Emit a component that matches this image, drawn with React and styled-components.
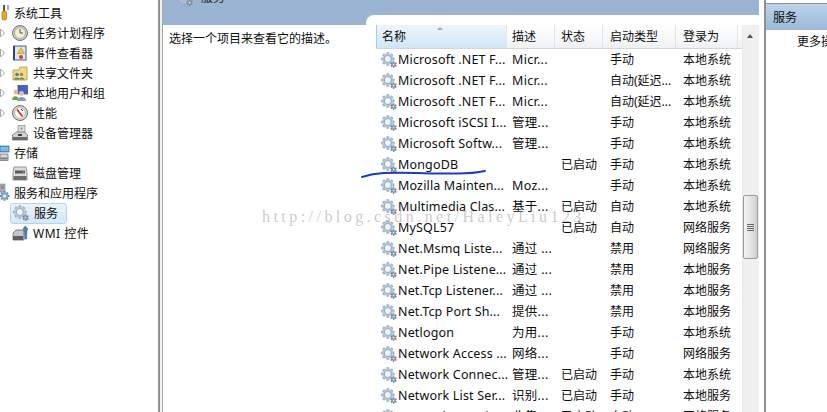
import React from "react";
import styled, { createGlobalStyle } from "styled-components";

const Global = createGlobalStyle`
  html, body { margin: 0; padding: 0; background: #fff; overflow: hidden; }
  #root { width: 827px; height: 412px; overflow: hidden; }
`;

const font = `"Noto Sans", "Noto Sans CJK SC", sans-serif`;

const Page = styled.div`
  position: relative;
  display: flex;
  width: 827px;
  height: 412px;
  overflow: hidden;
  background: #fff;
  color: #0e0e0e;
  font: 12px/21px ${font};
`;

const Tree = styled.nav`
  flex: 0 0 158px;
  padding-top: 3px;
  display: flex;
  flex-direction: column;
  box-sizing: border-box;
`;

const TreeRow = styled.div`
  height: 20px;
  display: flex;
  align-items: center;
  padding-left: ${(p) => p.$indent}px;
  position: relative;
  white-space: nowrap;
`;

const Arrow = styled.svg`
  position: absolute;
  left: 0;
  top: 5px;
  width: 6px;
  height: 10px;
`;

const TreeIcon = styled.svg`
  flex: 0 0 16px;
  width: 16px;
  height: 16px;
  margin-right: ${(p) => p.$gap ?? 5}px;
  overflow: visible;
`;

const Selected = styled.span`
  display: flex;
  align-items: center;
  height: 19px;
  margin-left: -2px;
  padding: 0 6px 0 2px;
  width: 47px;
  border: 1px solid #b5d4f0;
  border-radius: 3px;
  background: linear-gradient(#eaf3fc, #d5e7f9);
`;

const SelectedLabel = styled.span`
  font-size: 12px;
  margin-left: 5px;
`;

const Divider = styled.div`
  flex: 0 0 5px;
  box-sizing: border-box;
  border-left: 2px solid #8f8f8f;
  border-right: 1px solid #a9a9a9;
  background: #f0f0f0;
`;

const Center = styled.main`
  flex: 0 0 595px;
  display: flex;
  flex-direction: column;
`;

const Band = styled.div`
  flex: 0 0 25px;
  background: #9ab4d1;
  display: flex;
  align-items: flex-start;
`;

const BandInner = styled.div`
  display: flex;
  gap: 8px;
  margin-top: -13px;
  padding-left: 14px;
  height: 21px;
  color: #222;
  align-items: center;
`;

const Body = styled.div`
  flex: 1;
  display: flex;
  min-height: 0;
`;

const Desc = styled.p`
  flex: 0 0 203px;
  margin: 0;
  padding: 3px 0 0 6px;
  box-sizing: border-box;
  font-size: 12px;
  line-height: 21px;
`;

const ListPanel = styled.section`
  flex: 1;
  margin-top: -10px;
  padding: 10px 0 0 10px;
  background: #fff;
  border-radius: 8px 0 0 0;
  display: flex;
  min-width: 0;
`;

const Table = styled.div`
  flex: 0 0 366px;
  min-width: 0;
`;

const cols = "131px 48px 48px 73px 62px 4px";

const Head = styled.div`
  display: grid;
  grid-template-columns: ${cols};
  height: 23px;
  background: linear-gradient(#fff 0%, #f8f9fa 55%, #eef0f3 100%);
  border-bottom: 1px solid #d5d5d5;
`;

const HeadCell = styled.div`
  position: relative;
  box-sizing: border-box;
  padding-left: ${(p) => p.$pad ?? 5}px;
  padding-top: 1px;
  border-right: 1px solid #e3e4e6;
  background: ${(p) => p.$sorted ? "linear-gradient(#eef6fc 0%, #dcedf9 55%, #cfe6f6 100%)" : "none"};
  border-left: ${(p) => p.$sorted ? "1px solid #a5cbe6" : "none"};
  font-size: 12px;
  line-height: 21px;
`;

const SortMark = styled.span`
  position: absolute;
  left: 60px;
  top: 2px;
  width: 0;
  height: 0;
  border-style: solid;
  border-width: 0 3.5px 3.5px 3.5px;
  border-color: transparent transparent #8ab0cc transparent;
`;

const Row = styled.div`
  display: grid;
  grid-template-columns: ${cols};
  height: 21px;
  white-space: nowrap;
  font-size: 12px;
`;

const NameCell = styled.div`
  display: flex;
  align-items: center;
  gap: 1px;
  padding-left: 5px;
  letter-spacing: 0.16px;
  font-size: 12.5px;
`;

const Cell = styled.div`
  padding-left: ${(p) => p.$pad ?? 5}px;
`;

const DescCell = styled(Cell)`
  letter-spacing: 0.3px;
  font-size: 12.5px;
`;

const ScrollBar = styled.div`
  flex: 0 0 17px;
  background: #f0f0f0;
  position: relative;
  border-left: 1px solid #e9e9e9;
  box-sizing: border-box;
`;

const ScrollArrow = styled.span`
  position: absolute;
  left: 4px;
  top: 9px;
  width: 0;
  height: 0;
  border-style: solid;
  border-width: 0 3.5px 4px 3.5px;
  border-color: transparent transparent #555 transparent;
`;

const Thumb = styled.div`
  position: absolute;
  left: 0;
  top: 170px;
  width: 15px;
  height: 64px;
  box-sizing: border-box;
  border: 1px solid #9a9a9a;
  border-radius: 2px;
  background: linear-gradient(90deg, #f3f3f3 0%, #e6e6e6 45%, #cfcfcf 100%);
  display: flex;
  flex-direction: column;
  gap: 1px;
  align-items: center;
  justify-content: center;
`;

const Grip = styled.i`
  display: block;
  width: 7px;
  height: 1px;
  background: #666;
`;

const SideDivider = styled.div`
  flex: 0 0 7px;
  box-sizing: border-box;
  border-right: 2px solid #8f8f8f;
  background: #fff;
`;

const Actions = styled.aside`
  flex: 1;
  padding-top: 3px;
  min-width: 0;
  white-space: nowrap;
  overflow: hidden;
`;

const ActionsHead = styled.div`
  height: 27px;
  box-sizing: border-box;
  padding: 3px 0 0 7px;
  border-top: 1px solid #8f8f8f;
  background: linear-gradient(#bcd3e9, #9cb9d6);
  font-size: 12px;
`;

const ActionsItem = styled.div`
  padding: 1px 0 0 31px;
`;

const Watermark = styled.div`
  position: absolute;
  left: 262px;
  top: 207px;
  font: 16px/20px "Liberation Serif", serif;
  letter-spacing: 3.45px;
  color: rgba(120, 120, 120, 0.4);
  pointer-events: none;
  white-space: nowrap;
`;

const Ink = styled.svg`
  position: absolute;
  left: 358px;
  top: 166px;
  width: 130px;
  height: 14px;
  pointer-events: none;
`;

const GearIcon = () => (
  <svg width="16" height="16" viewBox="0 0 16 16" style={{ flex: "0 0 16px" }}>
    <g transform="translate(6.8 7)">
      {[0, 45, 90, 135].map((a) => (
        <rect key={a} x="-1.5" y="-6.8" width="3" height="13.6" rx=".5" fill="#9fb3c6" transform={`rotate(${a})`} />
      ))}
      <circle r="5.4" fill="#b7c8d8" />
      <circle r="3.5" fill="#f1f6fb" stroke="#8ba2b8" strokeWidth=".9" />
    </g>
    <g transform="translate(12.6 12.6)">
      {[0, 60, 120].map((a) => (
        <rect key={a} x="-.8" y="-3.2" width="1.6" height="6.4" fill="#6f8192" transform={`rotate(${a})`} />
      ))}
      <circle r="2" fill="#8b9cac" />
      <circle r=".8" fill="#e6edf3" />
    </g>
  </svg>
);

const IconTools = () => (
  <TreeIcon viewBox="0 0 16 16" $gap={3}>
    <path d="M9 0v6" stroke="#555" strokeWidth="2" />
    <rect x="7" y="6" width="4.500" height="9" rx="1.800" fill="#e8a91f" stroke="#a8760c" strokeWidth=".7" />
    <path d="M13 0v5" stroke="#777" strokeWidth="1.200" />
  </TreeIcon>
);

const IconClock = () => (
  <TreeIcon viewBox="0 0 16 16">
    <circle cx="8" cy="8" r="7.500" fill="#c9c9bc" stroke="#77776b" />
    <circle cx="8" cy="8" r="5.400" fill="#f4efd4" stroke="#999" strokeWidth=".6" />
    <path d="M8 4v4h3" fill="none" stroke="#555" strokeWidth="1" />
  </TreeIcon>
);

const IconLog = () => (
  <TreeIcon viewBox="0 0 16 16">
    <rect x="2" y="1" width="12" height="14" fill="#dfe6f2" stroke="#4e5f80" />
    <path d="M2 1v14" stroke="#2f4470" strokeWidth="2" />
    <path d="M9 2.500l3.500 6h-7z" fill="#f1c62b" stroke="#a87f0c" strokeWidth=".5" />
    <circle cx="9" cy="12" r="2" fill="#cf3b3b" />
  </TreeIcon>
);

const IconFolder = () => (
  <TreeIcon viewBox="0 0 16 16">
    <path d="M1 5h6l1-3h7v13H1z" fill="#f2d98a" stroke="#b3933d" strokeWidth=".8" />
    <circle cx="5" cy="9.500" r="1.800" fill="#3d7fae" />
    <circle cx="9.500" cy="9.500" r="1.800" fill="#b28b3a" />
    <path d="M2 14.500c0-2.500 6-2.500 6 0zM7 14.500c0-2.500 5.500-2.500 5.500 0z" fill="#58874d" />
  </TreeIcon>
);

const IconUsers = () => (
  <TreeIcon viewBox="0 0 16 16">
    <rect x="6" y="0.500" width="9.500" height="8.500" fill="#3d66c9" stroke="#2e4786" strokeWidth=".7" />
    <circle cx="4" cy="7" r="2.400" fill="#e7b98f" />
    <path d="M0 15c0-5 7-5 7 0z" fill="#6ba34f" />
    <circle cx="9.500" cy="8.500" r="2.400" fill="#e8c09b" />
    <path d="M5.500 16c0-5.500 8.500-5.500 8.500 0z" fill="#7d9cc9" />
  </TreeIcon>
);

const IconGauge = () => (
  <TreeIcon viewBox="0 0 16 16">
    <circle cx="8" cy="8" r="7.500" fill="#dad8cc" stroke="#6f6f66" />
    <circle cx="8" cy="8" r="5.400" fill="#fbfbf6" stroke="#888" strokeWidth=".5" />
    <path d="M5 4.500l5.500 7" stroke="#cc2a2a" strokeWidth="1.600" />
    <path d="M9 4l2 2" stroke="#333" strokeWidth=".9" />
  </TreeIcon>
);

const IconDevice = () => (
  <TreeIcon viewBox="0 0 16 16">
    <rect x="6" y="0.500" width="7" height="8" fill="#dcdcdc" stroke="#8a8a8a" strokeWidth=".7" />
    <circle cx="9.500" cy="3.500" r="1" fill="#5ca052" />
    <path d="M0.500 10l4-3h8l3 3v5H.5z" fill="#d2d2d2" stroke="#5b5b5b" strokeWidth=".7" />
    <rect x="1" y="12" width="14" height="3" fill="#6c6c6c" />
    <rect x="6" y="9" width="4" height="2" fill="#3e3e3e" />
  </TreeIcon>
);

const IconStorage = () => (
  <TreeIcon viewBox="0 0 16 16" $gap={3}>
    <rect x="5" y="1" width="9" height="6" fill="#4f9bd6" stroke="#2f6c99" strokeWidth=".7" />
    <path d="M5.500 3h8M5.500 5h8" stroke="#cfe6f7" strokeWidth=".8" />
    <rect x="5" y="9" width="8" height="6.500" fill="#d8d8d8" stroke="#666" strokeWidth=".7" />
    <rect x="5.500" y="12.500" width="7" height="2" fill="#7a7a7a" />
  </TreeIcon>
);

const IconDisk = () => (
  <TreeIcon viewBox="0 0 16 16">
    <path d="M2 2h12l1 5v8H1V7z" fill="#dcdcdc" stroke="#777" strokeWidth=".7" />
    <rect x="3" y="5.500" width="10" height="3" fill="#5a5a5a" />
    <circle cx="11.500" cy="7" r=".9" fill="#58b04d" />
    <rect x="1.500" y="11" width="13" height="4" fill="#6e6e6e" />
  </TreeIcon>
);

const IconServices = () => (
  <TreeIcon viewBox="0 0 16 16" $gap={3}>
    <rect x="5" y="-1" width="5" height="8" fill="#b4b4b4" stroke="#777" strokeWidth=".5" />
    <path d="M6 1h3M6 3h3" stroke="#555" strokeWidth=".7" />
    <g transform="translate(9.500 11)">
      {[0, 45, 90, 135].map((a) => (
        <rect key={a} x="-1" y="-4.800" width="2" height="9.600" fill="#5f83a6" transform={`rotate(${a})`} />
      ))}
      <circle r="3.400" fill="#8aa5bd" />
      <circle r="1.600" fill="#eaf0f5" />
    </g>
  </TreeIcon>
);

const IconWmi = () => (
  <TreeIcon viewBox="0 0 16 16">
    <path d="M1 8l3-3h8v10H1z" fill="#c6c6c6" stroke="#555" strokeWidth=".7" />
    <rect x="1" y="11" width="10" height="4" fill="#5e5e5e" />
    <path d="M13 1l-2 3 1.500 1 .5 9h1.500l.5-9 1-1z" fill="#4c7fc4" stroke="#2d4f82" strokeWidth=".5" />
  </TreeIcon>
);

const treeItems = [
  { text: "系统工具", Icon: IconTools, ml: -17 },
  { text: "任务计划程序", Icon: IconClock, arrow: true },
  { text: "事件查看器", Icon: IconLog, arrow: true },
  { text: "共享文件夹", Icon: IconFolder, arrow: true },
  { text: "本地用户和组", Icon: IconUsers, arrow: true },
  { text: "性能", Icon: IconGauge, arrow: true },
  { text: "设备管理器", Icon: IconDevice },
  { text: "存储", Icon: IconStorage, ml: -17 },
  { text: "磁盘管理", Icon: IconDisk },
  { text: "服务和应用程序", Icon: IconServices, ml: -17 },
];

const TreeLabel = styled.span`
  font-size: 12px;
`;

const WmiLabel = styled(TreeLabel)`
  letter-spacing: 0.5px;
`;

const Shift = styled.span`
  display: flex;
  align-items: center;
  margin-left: ${(p) => p.$ml}px;
`;

const rows = [
  ["Microsoft .NET F...", "Micr...", "", "手动", "本地系统"],
  ["Microsoft .NET F...", "Micr...", "", "自动(延迟...", "本地系统"],
  ["Microsoft .NET F...", "Micr...", "", "自动(延迟...", "本地系统"],
  ["Microsoft iSCSI I...", "管理...", "", "手动", "本地系统"],
  ["Microsoft Softw...", "管理...", "", "手动", "本地系统"],
  ["MongoDB", "", "已启动", "手动", "本地系统"],
  ["Mozilla Mainten...", "Moz...", "", "手动", "本地系统"],
  ["Multimedia Clas...", "基于...", "已启动", "自动", "本地系统"],
  ["MySQL57", "", "已启动", "自动", "网络服务"],
  ["Net.Msmq Liste...", "通过 ...", "", "禁用", "网络服务"],
  ["Net.Pipe Listene...", "通过 ...", "", "禁用", "本地服务"],
  ["Net.Tcp Listener...", "通过 ...", "", "禁用", "本地服务"],
  ["Net.Tcp Port Sh...", "提供...", "", "禁用", "本地服务"],
  ["Netlogon", "为用...", "", "手动", "本地系统"],
  ["Network Access ...", "网络...", "", "手动", "网络服务"],
  ["Network Connec...", "管理...", "已启动", "手动", "本地系统"],
  ["Network List Ser...", "识别...", "已启动", "手动", "本地服务"],
  ["Network Location...", "收集...", "已启动", "自动", "网络服务"],
];

export default function App() {
  return (
    <Page>
      <Global />
      <Tree>
        {treeItems.map(({ text, Icon, arrow, ml }) => (
          <TreeRow key={text} $indent={12}>
            {arrow && (
              <Arrow viewBox="0 0 6 10">
                <path d="M.5 1l4 4-4 4z" fill="#fff" stroke="#a6a6a6" strokeWidth="1" />
              </Arrow>
            )}
            <Shift $ml={ml ?? 0}>
              <Icon />
              <TreeLabel>{text}</TreeLabel>
            </Shift>
          </TreeRow>
        ))}
        <TreeRow $indent={12}>
          <Selected>
            <GearIcon />
            <SelectedLabel>服务</SelectedLabel>
          </Selected>
        </TreeRow>
        <TreeRow $indent={12}>
          <IconWmi />
          <WmiLabel>WMI 控件</WmiLabel>
        </TreeRow>
      </Tree>
      <Divider />
      <Center>
        <Band>
          <BandInner>
            <GearIcon />
            <TreeLabel>服务</TreeLabel>
          </BandInner>
        </Band>
        <Body>
          <Desc>选择一个项目来查看它的描述。</Desc>
          <ListPanel>
            <Table>
              <Head>
                <HeadCell $sorted>
                  <SortMark />
                  名称
                </HeadCell>
                <HeadCell>描述</HeadCell>
                <HeadCell $pad={6}>状态</HeadCell>
                <HeadCell $pad={7}>启动类型</HeadCell>
                <HeadCell $pad={7}>登录为</HeadCell>
                <HeadCell />
              </Head>
              {rows.map((r, i) => (
                <Row key={i}>
                  <NameCell>
                    <GearIcon />
                    {r[0]}
                  </NameCell>
                  <DescCell>{r[1]}</DescCell>
                  <Cell $pad={6}>{r[2]}</Cell>
                  <Cell $pad={7}>{r[3]}</Cell>
                  <Cell $pad={7}>{r[4]}</Cell>
                </Row>
              ))}
            </Table>
            <ScrollBar>
              <ScrollArrow />
              <Thumb>
                <Grip />
                <Grip />
                <Grip />
                <Grip />
              </Thumb>
            </ScrollBar>
          </ListPanel>
        </Body>
      </Center>
      <SideDivider />
      <Actions>
        <ActionsHead>服务</ActionsHead>
        <ActionsItem>更多操作</ActionsItem>
      </Actions>
      <Watermark>http://blog.csdn.net/HaleyLiu123</Watermark>
      <Ink viewBox="0 0 130 14">
        <path d="M4 11C10 9 17 7.500 26 7C50 6 75 8 100 7.500C110 7.500 120 6.500 127 5" fill="none" stroke="#1a3cc0" strokeWidth="2" strokeLinecap="round" />
      </Ink>
    </Page>
  );
}
